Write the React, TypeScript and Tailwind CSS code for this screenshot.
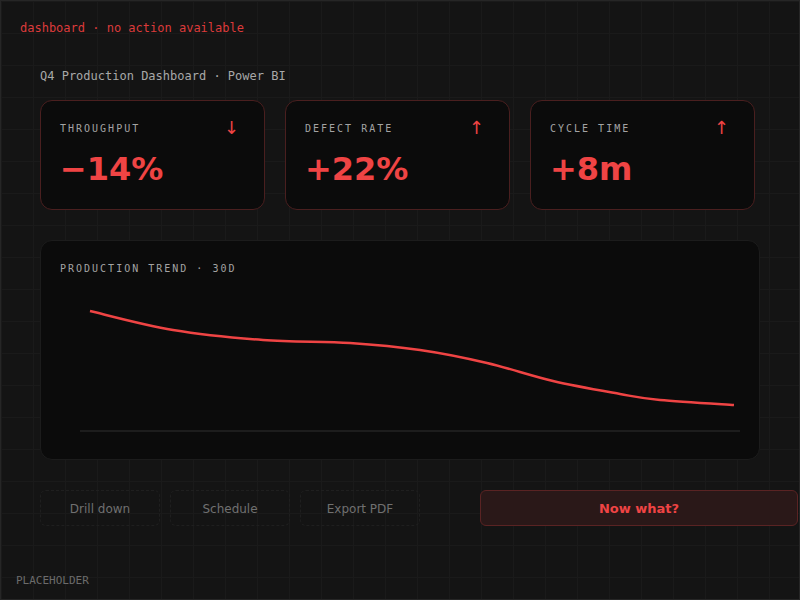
const mono = "font-['DejaVu_Sans_Mono',monospace]";
const sans = "font-['DejaVu_Sans',sans-serif]";

const kpis = [
  { label: 'THROUGHPUT', value: '−14%', arrow: '↓' },
  { label: 'DEFECT RATE', value: '+22%', arrow: '↑' },
  { label: 'CYCLE TIME', value: '+8m', arrow: '↑' },
];

// trend samples, in page coordinates (viewBox is offset to match)
const trend: [number, number][] = [
  [90, 310], [173, 329], [263, 339], [350, 342], [420, 349],
  [487, 362], [553, 380], [620, 393], [660, 399], [734, 404],
];

function smoothPath(pts: [number, number][]) {
  let d = `M${pts[0][0]} ${pts[0][1]}`;
  for (let i = 0; i < pts.length - 1; i++) {
    const p0 = pts[i - 1] || pts[i];
    const p1 = pts[i];
    const p2 = pts[i + 1];
    const p3 = pts[i + 2] || p2;
    const c1x = p1[0] + (p2[0] - p0[0]) / 6;
    const c1y = p1[1] + (p2[1] - p0[1]) / 6;
    const c2x = p2[0] - (p3[0] - p1[0]) / 6;
    const c2y = p2[1] - (p3[1] - p1[1]) / 6;
    d += ` C${c1x.toFixed(1)} ${c1y.toFixed(1)}, ${c2x.toFixed(1)} ${c2y.toFixed(1)}, ${p2[0]} ${p2[1]}`;
  }
  return d;
}

function KpiCard({ label, value, arrow }: { label: string; value: string; arrow: string }) {
  return (
    <div className="w-[225px] h-[110px] rounded-xl border border-[#4a1f1f] bg-[#0b0b0b] pl-[19px] pr-[25px] pt-[19px]">
      <div className="flex items-center justify-between h-4">
        <span className={`${mono} text-[10px] tracking-[0.2em] text-[#a3a3a3]`}>{label}</span>
        <span className={`${sans} text-[18px] leading-4 text-[#ef4444]`}>{arrow}</span>
      </div>
      <div className={`${sans} mt-[17px] text-[32px] leading-8 font-bold text-[#ef4444]`}>{value}</div>
    </div>
  );
}

export default function App() {
  return (
    <div className="relative w-[800px] h-[600px] overflow-hidden border border-[#262626] bg-[#141414] bg-[linear-gradient(#1a1a1a_1px,transparent_1px),linear-gradient(90deg,#1a1a1a_1px,transparent_1px)] bg-[size:32px_32px]">
      <div className={`${mono} pl-[19px] pt-[19px] text-[12px] leading-4 text-[#dc3b3b]`}>
        dashboard · no action available
      </div>

      <div className="pl-[39px] pt-8">
        <div className={`${mono} text-[12px] leading-4 text-[#a8a8a8]`}>Q4 Production Dashboard · Power BI</div>

        <div className="mt-4 flex gap-5">
          {kpis.map((k) => (
            <KpiCard key={k.label} {...k} />
          ))}
        </div>

        <div className="mt-[30px] w-[720px] h-[220px] rounded-xl border border-[#1c1c1c] bg-[#0b0b0b] pt-5 pl-[19px]">
          <div className={`${mono} text-[10px] leading-4 tracking-[0.2em] text-[#a3a3a3]`}>PRODUCTION TREND · 30D</div>
          <svg width="680" height="164" viewBox="60 276 680 164" className="block">
            <line x1="80" y1="430" x2="740" y2="430" stroke="#242424" strokeWidth="1.5" />
            <path d={smoothPath(trend)} fill="none" stroke="#ef4444" strokeWidth="2.5" />
          </svg>
        </div>

        <div className={`${sans} mt-[30px] flex items-center gap-[10px] text-[12px]`}>
          {['Drill down', 'Schedule', 'Export PDF'].map((t) => (
            <div
              key={t}
              className="w-[120px] h-9 pt-px flex items-center justify-center rounded-md border border-dashed border-[#1f1f1f] text-[#707070]"
            >
              {t}
            </div>
          ))}
          <div className="ml-[50px] w-[318px] h-9 pt-px shrink-0 flex items-center justify-center rounded-md border border-[#5a2323] bg-[#2a1818] text-[13px] font-bold text-[#ef4444]">
            Now what?
          </div>
        </div>
      </div>

      <div className={`${mono} absolute left-[15px] bottom-[10px] text-[11px] leading-4 text-[#6b6b6b]`}>PLACEHOLDER</div>
    </div>
  );
}
